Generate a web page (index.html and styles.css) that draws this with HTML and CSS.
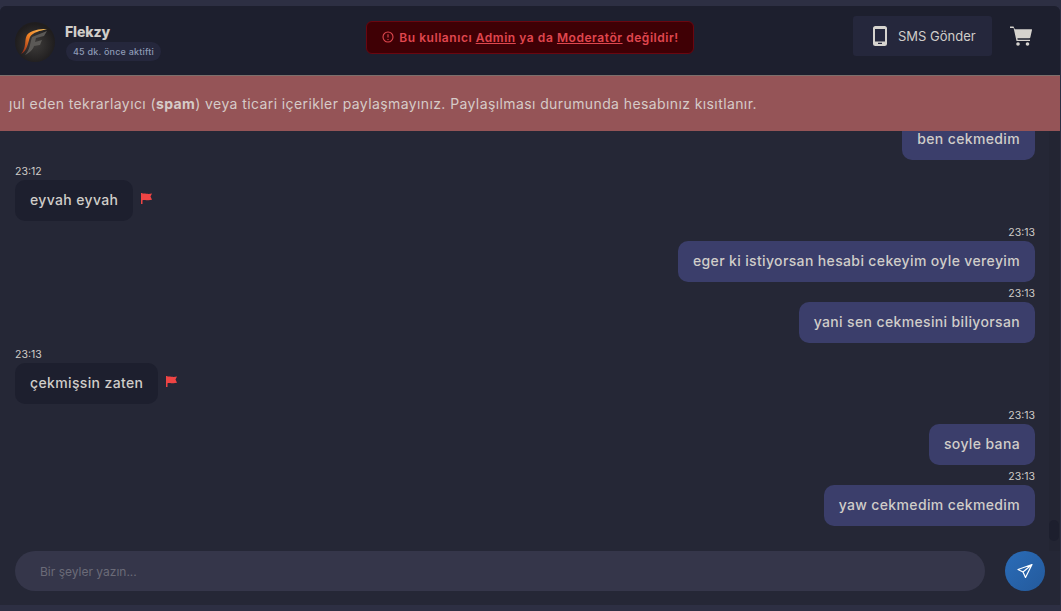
FILE: index.html
```html
<!DOCTYPE html>
<html lang="en">
<head>
    <meta charset="UTF-8">
    <meta name="viewport" content="width=device-width, initial-scale=1.0">
    <title>Flekzy</title>
    <link rel="stylesheet" href="styles.css">
</head>
<body>
    <div class="panel">
        <header class="top">
            <div class="user">
                <svg class="avatar" width="40" height="40" viewBox="0 0 40 40">
                    <defs>
                        <radialGradient id="av" cx="50%" cy="55%" r="50%">
                            <stop offset="0" stop-color="#3e3c3a"/>
                            <stop offset="1" stop-color="#1f1d1e"/>
                        </radialGradient>
                        <linearGradient id="sw" x1="1" y1="0" x2="0" y2="1">
                            <stop offset="0" stop-color="#f6c05a"/>
                            <stop offset="0.5" stop-color="#ee7f24"/>
                            <stop offset="1" stop-color="#8a2318"/>
                        </linearGradient>
                    </defs>
                    <circle cx="20" cy="20" r="20" fill="url(#av)"/>
                    <path d="M32 7 C24 7 16 8 12 13 C9 18 12 25 6 32 C12 29 13 21 15 15 C18 10 25 9 32 7Z" fill="url(#sw)"/>
                    <path d="M17 15 L32 9 L29 14 L21 16 L20 20 L27 18 L25 23 L19 24 C18 28 14 31 10 33 C15 28 15 21 17 15Z" fill="#5b5956"/>
                </svg>
                <div class="user-info">
                    <div class="user-name">Flekzy</div>
                    <div class="user-status">45 dk. önce aktifti</div>
                </div>
            </div>
            <div class="warn">
                <svg width="12" height="12" viewBox="0 0 12 12" fill="none" stroke="#e0474f" stroke-width="1.100">
                    <circle cx="6" cy="6" r="5"/>
                    <path d="M6 3.200V6.400M6 8V8.900"/>
                </svg>
                <span>Bu kullanıcı <u>Admin</u> ya da <u>Moderatör</u> değildir!</span>
            </div>
            <div class="actions">
                <div class="sms-btn">
                    <svg width="14" height="20" viewBox="0 0 14 20">
                        <path fill-rule="evenodd" fill="#d6d3ce" d="M2.500 0h9A2.500 2.500 0 0 1 14 2.500v15a2.500 2.500 0 0 1-2.500 2.500h-9A2.500 2.500 0 0 1 0 17.500v-15A2.500 2.500 0 0 1 2.500 0zM2 3v12.500h10V3zM5 16.800v1.200h4v-1.200z"/>
                    </svg>
                    <span>SMS Gönder</span>
                </div>
                <svg class="cart" width="22" height="20" viewBox="0 0 22 20">
                    <path fill="#d6d3ce" d="M0 0.500h3.500l1.300 2.800H21.500a.5.500 0 0 1 .5.600l-1.700 7.600a1 1 0 0 1-1 .8H7.400l.3 1.500H20v1.300H6.500L3.600 2H0z"/>
                    <circle cx="8" cy="18" r="1.800" fill="#d6d3ce"/>
                    <circle cx="17.500" cy="18" r="1.800" fill="#d6d3ce"/>
                </svg>
            </div>
        </header>
        <div class="chat">
            <div class="notice">ȷul eden tekrarlayıcı (<b>spam</b>) veya ticari içerikler paylaşmayınız. Paylaşılması durumunda hesabınız kısıtlanır.</div>
            <div class="messages">
                <div class="msg mine">
                    <div class="bubble">ben cekmedim</div>
                </div>
                <div class="msg">
                    <div class="time">23:12</div>
                    <div class="row">
                        <div class="bubble">eyvah eyvah</div>
                        <svg class="flag" width="11" height="11" viewBox="0 0 11 11"><path fill="#ef4444" d="M0 0h1.500v.8C4 0 6 1.600 11 .6L9.500 3.500 11 6.800C6 8 4 6.200 1.500 7.200V11H0z"/></svg>
                    </div>
                </div>
                <div class="msg mine">
                    <div class="time">23:13</div>
                    <div class="bubble">eger ki istiyorsan hesabi cekeyim oyle vereyim</div>
                </div>
                <div class="msg mine">
                    <div class="time">23:13</div>
                    <div class="bubble">yani sen cekmesini biliyorsan</div>
                </div>
                <div class="msg">
                    <div class="time">23:13</div>
                    <div class="row">
                        <div class="bubble">çekmişsin zaten</div>
                        <svg class="flag" width="11" height="11" viewBox="0 0 11 11"><path fill="#ef4444" d="M0 0h1.500v.8C4 0 6 1.600 11 .6L9.500 3.500 11 6.800C6 8 4 6.200 1.500 7.200V11H0z"/></svg>
                    </div>
                </div>
                <div class="msg mine">
                    <div class="time">23:13</div>
                    <div class="bubble">soyle bana</div>
                </div>
                <div class="msg mine">
                    <div class="time">23:13</div>
                    <div class="bubble">yaw cekmedim cekmedim</div>
                </div>
                <div class="scroll-track">
                    <div class="scroll-thumb"></div>
                </div>
            </div>
            <div class="composer">
                <input class="composer-input" type="text" placeholder="Bir şeyler yazın...">
                <button class="send" type="button">
                    <svg width="16" height="16" viewBox="0 0 16 16" fill="none" stroke="#fff" stroke-width="1.200" stroke-linejoin="round">
                        <path d="M15 1.500L1 6.500l5 2.500 2.500 5.500zM15 1.500L6 9"/>
                    </svg>
                </button>
            </div>
        </div>
    </div>
</body>
</html>
```

FILE: styles.css
```css
* {
    box-sizing: border-box;
}
body {
    margin: 0;
    height: 611px;
    overflow: hidden;
    padding: 6px 0;
    background-color: #2d2f43;
    font-family: Inter, "Open Sans", sans-serif;
    color: #d0cdc9;
}
.panel {
    height: 599px;
    margin-right: 1px;
    display: flex;
    flex-direction: column;
    background-color: #252736;
    border-radius: 6px 6px 0 0;
    overflow: hidden;
}
.top {
    height: 69px;
    flex: none;
    display: flex;
    align-items: center;
    background-color: #1d1f2e;
    padding: 0 28px 0 15px;
}
.user {
    flex: 1;
    display: flex;
    align-items: center;
    gap: 10px;
    padding-top: 2px;
}
.user-name {
    font-size: 14px;
    font-weight: 800;
    line-height: 18px;
    letter-spacing: -0.1px;
}
.user-status {
    margin: 1px 0 0 1px;
    font-size: 9px;
    font-weight: 500;
    letter-spacing: 0.2px;
    line-height: 19px;
    padding: 0 7px;
    border-radius: 10px;
    background-color: #25273c;
    color: #8d9ab5;
}
.warn {
    display: flex;
    align-items: center;
    gap: 5px;
    height: 33px;
    padding: 0 14px 0 15px;
    margin: 0 0 7px 13px;
    border: 1px solid #6b0610;
    border-radius: 6px;
    background-color: #3f0005;
    color: #e0474f;
    font-size: 12px;
    font-weight: 600;
    letter-spacing: 0.55px;
}
.actions {
    flex: 1;
    display: flex;
    align-items: center;
    justify-content: flex-end;
    gap: 18px;
    margin-bottom: 10px;
}
.sms-btn {
    display: flex;
    align-items: center;
    gap: 11px;
    width: 139px;
    height: 40px;
    padding-left: 20px;
    border-radius: 3px;
    background-color: #25273c;
    font-size: 13px;
}
.chat {
    position: relative;
    flex: 1;
    display: flex;
    flex-direction: column;
    min-height: 0;
}
.notice {
    position: absolute;
    top: 0;
    left: 0;
    right: -1px;
    z-index: 2;
    height: 56px;
    line-height: 55px;
    padding-left: 9px;
    border-top: 1px solid #7d6f6c;
    background-color: #955457;
    color: #d6cbc8;
    font-size: 14px;
    letter-spacing: 0.4px;
    white-space: nowrap;
}
.notice b {
    font-weight: 700;
}
.messages {
    position: relative;
    flex: 1;
    min-height: 0;
    display: flex;
    flex-direction: column;
    justify-content: flex-end;
    overflow: hidden;
    padding: 0 25px 25px 15px;
}
.msg {
    flex: none;
    display: flex;
    flex-direction: column;
    align-items: flex-start;
}
.mine {
    align-items: flex-end;
}
.time {
    height: 20px;
    padding-top: 5px;
    font-size: 10.5px;
    line-height: 14px;
}
.row {
    display: flex;
    align-items: flex-start;
    gap: 8px;
}
.flag {
    margin-top: 13px;
}
.bubble {
    height: 41px;
    line-height: 40px;
    padding: 0 15px;
    border-radius: 10px;
    background-color: #1d1f2e;
    font-size: 14px;
    font-weight: 450;
    letter-spacing: 0.36px;
    white-space: nowrap;
}
.mine .bubble {
    background-color: #3b3e6b;
}
.scroll-track {
    position: absolute;
    top: 0;
    right: 0;
    bottom: 0;
    width: 11px;
    padding-bottom: 10px;
    display: flex;
    align-items: flex-end;
    background-color: #232533;
}
.scroll-thumb {
    width: 10px;
    height: 21px;
    border-radius: 5px;
    background-color: #1d1f2e;
}
.composer {
    flex: none;
    display: flex;
    align-items: center;
    gap: 20px;
    height: 54px;
    padding: 0 15px 14px 15px;
}
.composer-input {
    flex: 1;
    height: 40px;
    padding: 0 25px;
    border: none;
    border-radius: 20px;
    background-color: #35364a;
    color: #d0cdc9;
    font-family: inherit;
    font-size: 12px;
}
.composer-input::placeholder {
    color: #6b6b78;
}
.send {
    width: 40px;
    height: 40px;
    flex: none;
    display: flex;
    align-items: center;
    justify-content: center;
    padding: 0;
    border: none;
    border-radius: 50%;
    background: linear-gradient(135deg, #2a6cb8, #245a9c);
}
```
